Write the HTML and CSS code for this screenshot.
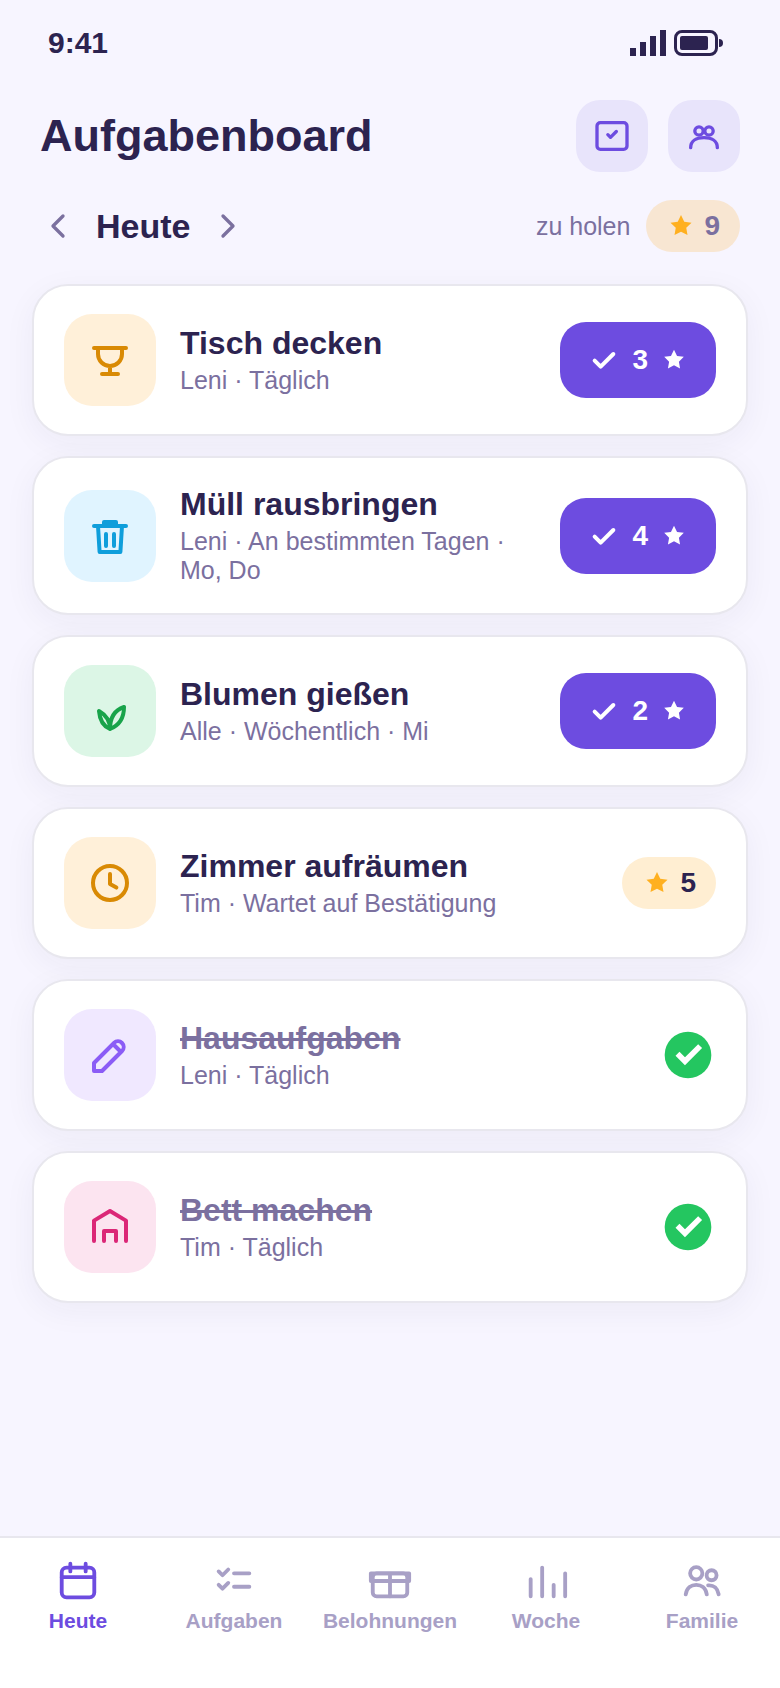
FILE: index.html
```html
<!DOCTYPE html>
<html lang="de">

<head>
  <meta charset="UTF-8">
  <meta name="viewport" content="width=device-width, initial-scale=1">
  <title>Aufgabenboard</title>
  <link rel="stylesheet" href="styles.css">
</head>

<body>

  <!-- shared shapes -->
  <svg class="sprite" aria-hidden="true">
    <symbol id="star" viewBox="0 0 24 24"><path d="M12 3.2l2.6 5.3 5.8.8-4.2 4.1 1 5.8-5.2-2.7-5.2 2.7 1-5.8-4.2-4.1 5.8-.8z"/></symbol>
    <symbol id="check" viewBox="0 0 24 24"><path d="M5 12.5l4.5 4.5L19 7.5"/></symbol>
    <symbol id="done" viewBox="0 0 24 24"><circle cx="12" cy="12" r="10" fill="#24c660"/><path d="M7.5 11.5l3.2 3.2 6.5-6.5" fill="none" stroke="#fff" stroke-width="2.4"/></symbol>
  </svg>

  <div class="status">
    <span class="time">9:41</span>
    <div class="status-icons">
      <svg width="36" height="26" viewBox="0 0 36 26" aria-hidden="true"><path d="M0 18h6v8H0zM10 12h6v14h-6zM20 6h6v20h-6zM30 0h6v26h-6z"/></svg>
      <svg width="50" height="26" viewBox="0 0 50 26" aria-hidden="true"><rect x="1.5" y="1.5" width="41" height="23" rx="6.5" fill="none" stroke="currentColor" stroke-width="3"/><rect x="6" y="6" width="28" height="14" rx="2"/><path d="M45 9a4 4 0 0 1 0 8z"/></svg>
    </div>
  </div>

  <header class="header">
    <h1>Aufgabenboard</h1>
    <div class="actions">
      <button class="action" aria-label="Bestätigen">
        <svg class="icon" viewBox="0 0 24 24"><rect x="3" y="4" width="18" height="16" rx="2"/><path d="M9.5 11.2l1.6 1.6 3.5-3.5"/></svg>
      </button>
      <button class="action" aria-label="Familie">
        <svg class="icon" viewBox="0 0 24 24"><circle cx="9" cy="9" r="2.5"/><circle cx="15" cy="9" r="2.5"/><path d="M4 19c0-4 3.5-6 8-6s8 2 8 6"/></svg>
      </button>
    </div>
  </header>

  <div class="day">
    <button class="arrow" aria-label="Zurück"><svg class="icon" viewBox="0 0 24 24"><path d="M15 6l-6 6 6 6"/></svg></button>
    <h2>Heute</h2>
    <button class="arrow" aria-label="Weiter"><svg class="icon" viewBox="0 0 24 24"><path d="M9 6l6 6-6 6"/></svg></button>
    <span class="open">zu holen</span>
    <span class="pill muted"><svg class="star"><use href="#star"/></svg>9</span>
  </div>

  <main class="list">
    <article class="card">
      <div class="tile amber"><svg class="icon" viewBox="0 0 24 24"><path d="M4 6h16M6 6v3a6 6 0 0 0 12 0V6M12 15v4M8 19h8"/></svg></div>
      <div class="info">
        <h3>Tisch decken</h3>
        <p>Leni · Täglich</p>
      </div>
      <button class="claim"><svg class="check"><use href="#check"/></svg>3<svg class="star"><use href="#star"/></svg></button>
    </article>

    <article class="card">
      <div class="tile blue"><svg class="icon" viewBox="0 0 24 24"><path d="M4 7h16M9 7V5h6v2M6 7l.8 13h10.4L18 7M10 11v6M14 11v6"/></svg></div>
      <div class="info">
        <h3>Müll rausbringen</h3>
        <p>Leni · An bestimmten Tagen · Mo, Do</p>
      </div>
      <button class="claim"><svg class="check"><use href="#check"/></svg>4<svg class="star"><use href="#star"/></svg></button>
    </article>

    <article class="card">
      <div class="tile green"><svg class="icon" viewBox="0 0 24 24"><path d="M12 21c0-6 2.5-9.500 7-11 0 5-2 9-7 11zM12 21c0-4-2-7-5.500-9 .3 4 2 7.500 5.500 9z"/></svg></div>
      <div class="info">
        <h3>Blumen gießen</h3>
        <p>Alle · Wöchentlich · Mi</p>
      </div>
      <button class="claim"><svg class="check"><use href="#check"/></svg>2<svg class="star"><use href="#star"/></svg></button>
    </article>

    <article class="card">
      <div class="tile amber"><svg class="icon" viewBox="0 0 24 24"><circle cx="12" cy="12" r="8.5"/><path d="M12 7.5v5l3.2 1.8"/></svg></div>
      <div class="info">
        <h3>Zimmer aufräumen</h3>
        <p>Tim · Wartet auf Bestätigung</p>
      </div>
      <span class="pill"><svg class="star"><use href="#star"/></svg>5</span>
    </article>

    <article class="card finished">
      <div class="tile purple"><svg class="icon" viewBox="0 0 24 24"><path d="M4 20h4L18 10a2.8 2.8 0 0 0-4-4L4 16zM13.5 6.5l4 4"/></svg></div>
      <div class="info">
        <h3>Hausaufgaben</h3>
        <p>Leni · Täglich</p>
      </div>
      <svg class="done" role="img" aria-label="Erledigt"><use href="#done"/></svg>
    </article>

    <article class="card finished">
      <div class="tile pink"><svg class="icon" viewBox="0 0 24 24"><path d="M4 19V8.8L12 4l8 4.8V19M9 19v-5h6v5"/></svg></div>
      <div class="info">
        <h3>Bett machen</h3>
        <p>Tim · Täglich</p>
      </div>
      <svg class="done" role="img" aria-label="Erledigt"><use href="#done"/></svg>
    </article>
  </main>

  <nav class="tabs">
    <a class="active" href="#heute">
      <svg class="icon" viewBox="0 0 24 24"><rect x="3.5" y="5" width="17" height="15.5" rx="2.5"/><path d="M3.5 10h17M8 3v4M16 3v4"/></svg>
      Heute
    </a>
    <a href="#aufgaben">
      <svg class="icon" viewBox="0 0 24 24"><path d="M4 7l2 2 3-3M4 14l2 2 3-3M12 8h8M12 15h8"/></svg>
      Aufgaben
    </a>
    <a href="#belohnungen">
      <svg class="icon" viewBox="0 0 24 24"><rect x="3" y="8" width="18" height="12" rx="2"/><path d="M2 8h20v4H2zM12 8v12"/></svg>
      Belohnungen
    </a>
    <a href="#woche">
      <svg class="icon" viewBox="0 0 24 24"><path d="M4 20v-9M10 20V5M16 20v-6M22 20V8"/></svg>
      Woche
    </a>
    <a href="#familie">
      <svg class="icon" viewBox="0 0 24 24"><circle cx="9" cy="8" r="3.2"/><circle cx="17" cy="9" r="2.6"/><path d="M3.5 19c.5-3.500 3-5 5.500-5s5 1.500 5.500 5M15.200 14.300c3-.3 5 1.700 5.500 4.700"/></svg>
      Familie
    </a>
  </nav>

</body>

</html>
```
FILE: styles.css
```css
* {box-sizing: border-box;}

body {
  margin: 0;
  min-height: 100vh;
  display: flex;
  flex-direction: column;
  background: #f7f5ff;
  color: #2c2350;
  font-family: "Liberation Sans", Arial, sans-serif;
}

h1, h2, h3, p {margin: 0;}

button {
  border: 0;
  padding: 0;
  background: none;
  font-family: inherit;
  cursor: pointer;
}

svg {display: block; flex: none; fill: currentColor;}

.sprite {display: none;}

.icon, .check {
  fill: none;
  stroke: currentColor;
  stroke-width: 2;
  stroke-linecap: round;
  stroke-linejoin: round;
}

/* status bar */
.status {
  display: flex;
  align-items: center;
  justify-content: space-between;
  padding: 26px 56px 26px 48px;
}

.time {font-size: 30px; line-height: 34px; font-weight: bold;}

.status-icons {display: flex; gap: 8px;}

/* header */
.header {
  display: flex;
  align-items: center;
  justify-content: space-between;
  padding: 14px 40px 28px;
}

h1 {font-size: 45px; line-height: 52px;}

.actions {display: flex; gap: 20px;}

.action {
  display: grid;
  place-items: center;
  width: 72px;
  height: 72px;
  border-radius: 24px;
  background: #e8e4fb;
  color: #6d4ce0;
}

.action .icon, .arrow .icon {width: 40px; height: 40px;}

.day {
  display: flex;
  align-items: center;
  gap: 18px;
  padding: 0 40px 32px 38px;
}

h2 {font-size: 34px; line-height: 38px;}

.arrow {color: #7b709f;}

.open {
  margin-left: auto;
  margin-right: -2px;
  font-size: 25px;
  line-height: 29px;
  color: #7b709f;
}

.pill {
  display: flex;
  align-items: center;
  gap: 8px;
  padding: 10px 20px;
  border-radius: 26px;
  background: rgba(255, 168, 30, .2);
  font-size: 28px;
  line-height: 32px;
  font-weight: bold;
}

.pill.muted {color: #7b709f;}

.pill .star {width: 30px; height: 30px; color: #ffb020;}

/* tasks */
.list {
  flex: 1;
  display: flex;
  flex-direction: column;
  gap: 20px;
  padding: 0 32px 32px;
}

.card {
  display: flex;
  align-items: center;
  gap: 24px;
  padding: 28px 30px;
  border: 2px solid #e8e7ee;
  border-radius: 36px;
  background: #fff;
  box-shadow: 0 8px 32px rgba(44, 35, 80, .05);
}

.tile {
  flex: none;
  display: grid;
  place-items: center;
  width: 92px;
  height: 92px;
  border-radius: 28px;
}

.tile .icon {width: 48px; height: 48px;}

.amber {background: #fff0d9; color: #d98a04;}
.blue {background: #e0f4ff; color: #0f9edb;}
.green {background: #dcf6e6; color: #18a34a;}
.purple {background: #f0e8ff; color: #8b5cf6;}
.pink {background: #fce4f0; color: #db2777;}

.info {flex: 1; min-width: 0;}

h3 {font-size: 32px; line-height: 37px; margin-bottom: 4px;}

.info p {font-size: 25px; line-height: 29px; color: #7b709f;}

.finished h3 {color: #7b709f; text-decoration: line-through;}

.claim {
  flex: none;
  display: flex;
  align-items: center;
  gap: 12px;
  padding: 22px 28px;
  border-radius: 26px;
  background: #6d4ce0;
  color: #fff;
  font-size: 28px;
  line-height: 32px;
  font-weight: bold;
}

.claim .check {width: 32px; height: 32px; stroke-width: 3;}
.claim .star {width: 28px; height: 28px;}

.done {width: 56px; height: 56px;}

/* bottom tabs */
.tabs {
  display: grid;
  grid-template-columns: repeat(5, 1fr);
  padding: 20px 0 55px;
  border-top: 2px solid #e8e7ee;
  background: #fff;
}

.tabs a {
  display: flex;
  flex-direction: column;
  align-items: center;
  gap: 5px;
  font-size: 21px;
  line-height: 24px;
  font-weight: bold;
  color: #a8a0c6;
  text-decoration: none;
}

.tabs .active {color: #6d4ce0;}

.tabs .icon {width: 46px; height: 46px;}
```
